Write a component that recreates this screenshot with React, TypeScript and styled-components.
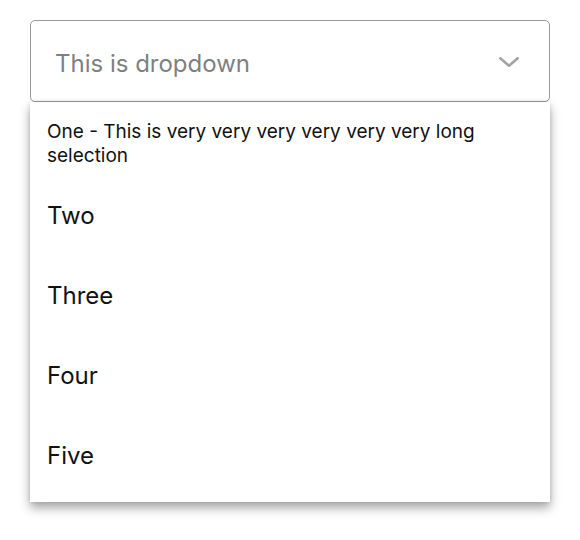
import React from "react";
import styled, { createGlobalStyle } from "styled-components";

const GlobalStyle = createGlobalStyle`
  html, body {
    margin: 0;
    padding: 0;
    background: #ffffff;
  }
  body {
    font-family: Inter, "Open Sans", "Liberation Sans", sans-serif;
    min-height: 100vh;
  }
  * { box-sizing: border-box; }
`;

const Wrapper = styled.div`
  width: 520px;
  margin: 0 0 0 30px;
  padding: 20px 0 30px 0;
  display: flex;
  flex-direction: column;
`;

const Select = styled.div`
  height: 82px;
  border: 1.5px solid #9a9a9a;
  border-radius: 5px;
  display: flex;
  align-items: center;
  justify-content: space-between;
  padding: 5px 30px 0 24px;
  background: #fff;
`;

const Placeholder = styled.span`
  font-size: 24px;
  color: #7f7f7f;
  line-height: 29px;
`;

const Chevron = styled.svg`
  width: 20px;
  height: 10px;
  margin-top: -4px;
  display: block;
`;

const Menu = styled.ul`
  list-style: none;
  margin: 0;
  padding: 0;
  background: #fff;
  box-shadow: 0 6px 10px rgba(0, 0, 0, 0.35), 0 0 4px rgba(0, 0, 0, 0.12);
`;

const Item = styled.li<{ $small?: boolean }>`
  height: 80px;
  padding: ${(p) => (p.$small ? "18px" : "19px")} 17px 0 17px;
  color: #111;
  font-size: ${(p) => (p.$small ? "19px" : "24px")};
  line-height: ${(p) => (p.$small ? "23.5px" : "29px")};
  overflow: hidden;
`;

const options = [
  "One - This is very very very very very very long selection",
  "Two",
  "Three",
  "Four",
  "Five",
];

export default function App() {
  return (
    <>
      <GlobalStyle />
      <Wrapper>
        <Select>
          <Placeholder>This is dropdown</Placeholder>
          <Chevron viewBox="0 0 20 10" fill="none">
            <polyline
              points="1.3,1.3 10,8.7 18.7,1.3"
              stroke="#a3a3a3"
              strokeWidth="2.6"
              strokeLinecap="round"
              strokeLinejoin="round"
            />
          </Chevron>
        </Select>
        <Menu>
          {options.map((o, i) => (
            <Item key={o} $small={i === 0}>
              {o}
            </Item>
          ))}
        </Menu>
      </Wrapper>
    </>
  );
}
